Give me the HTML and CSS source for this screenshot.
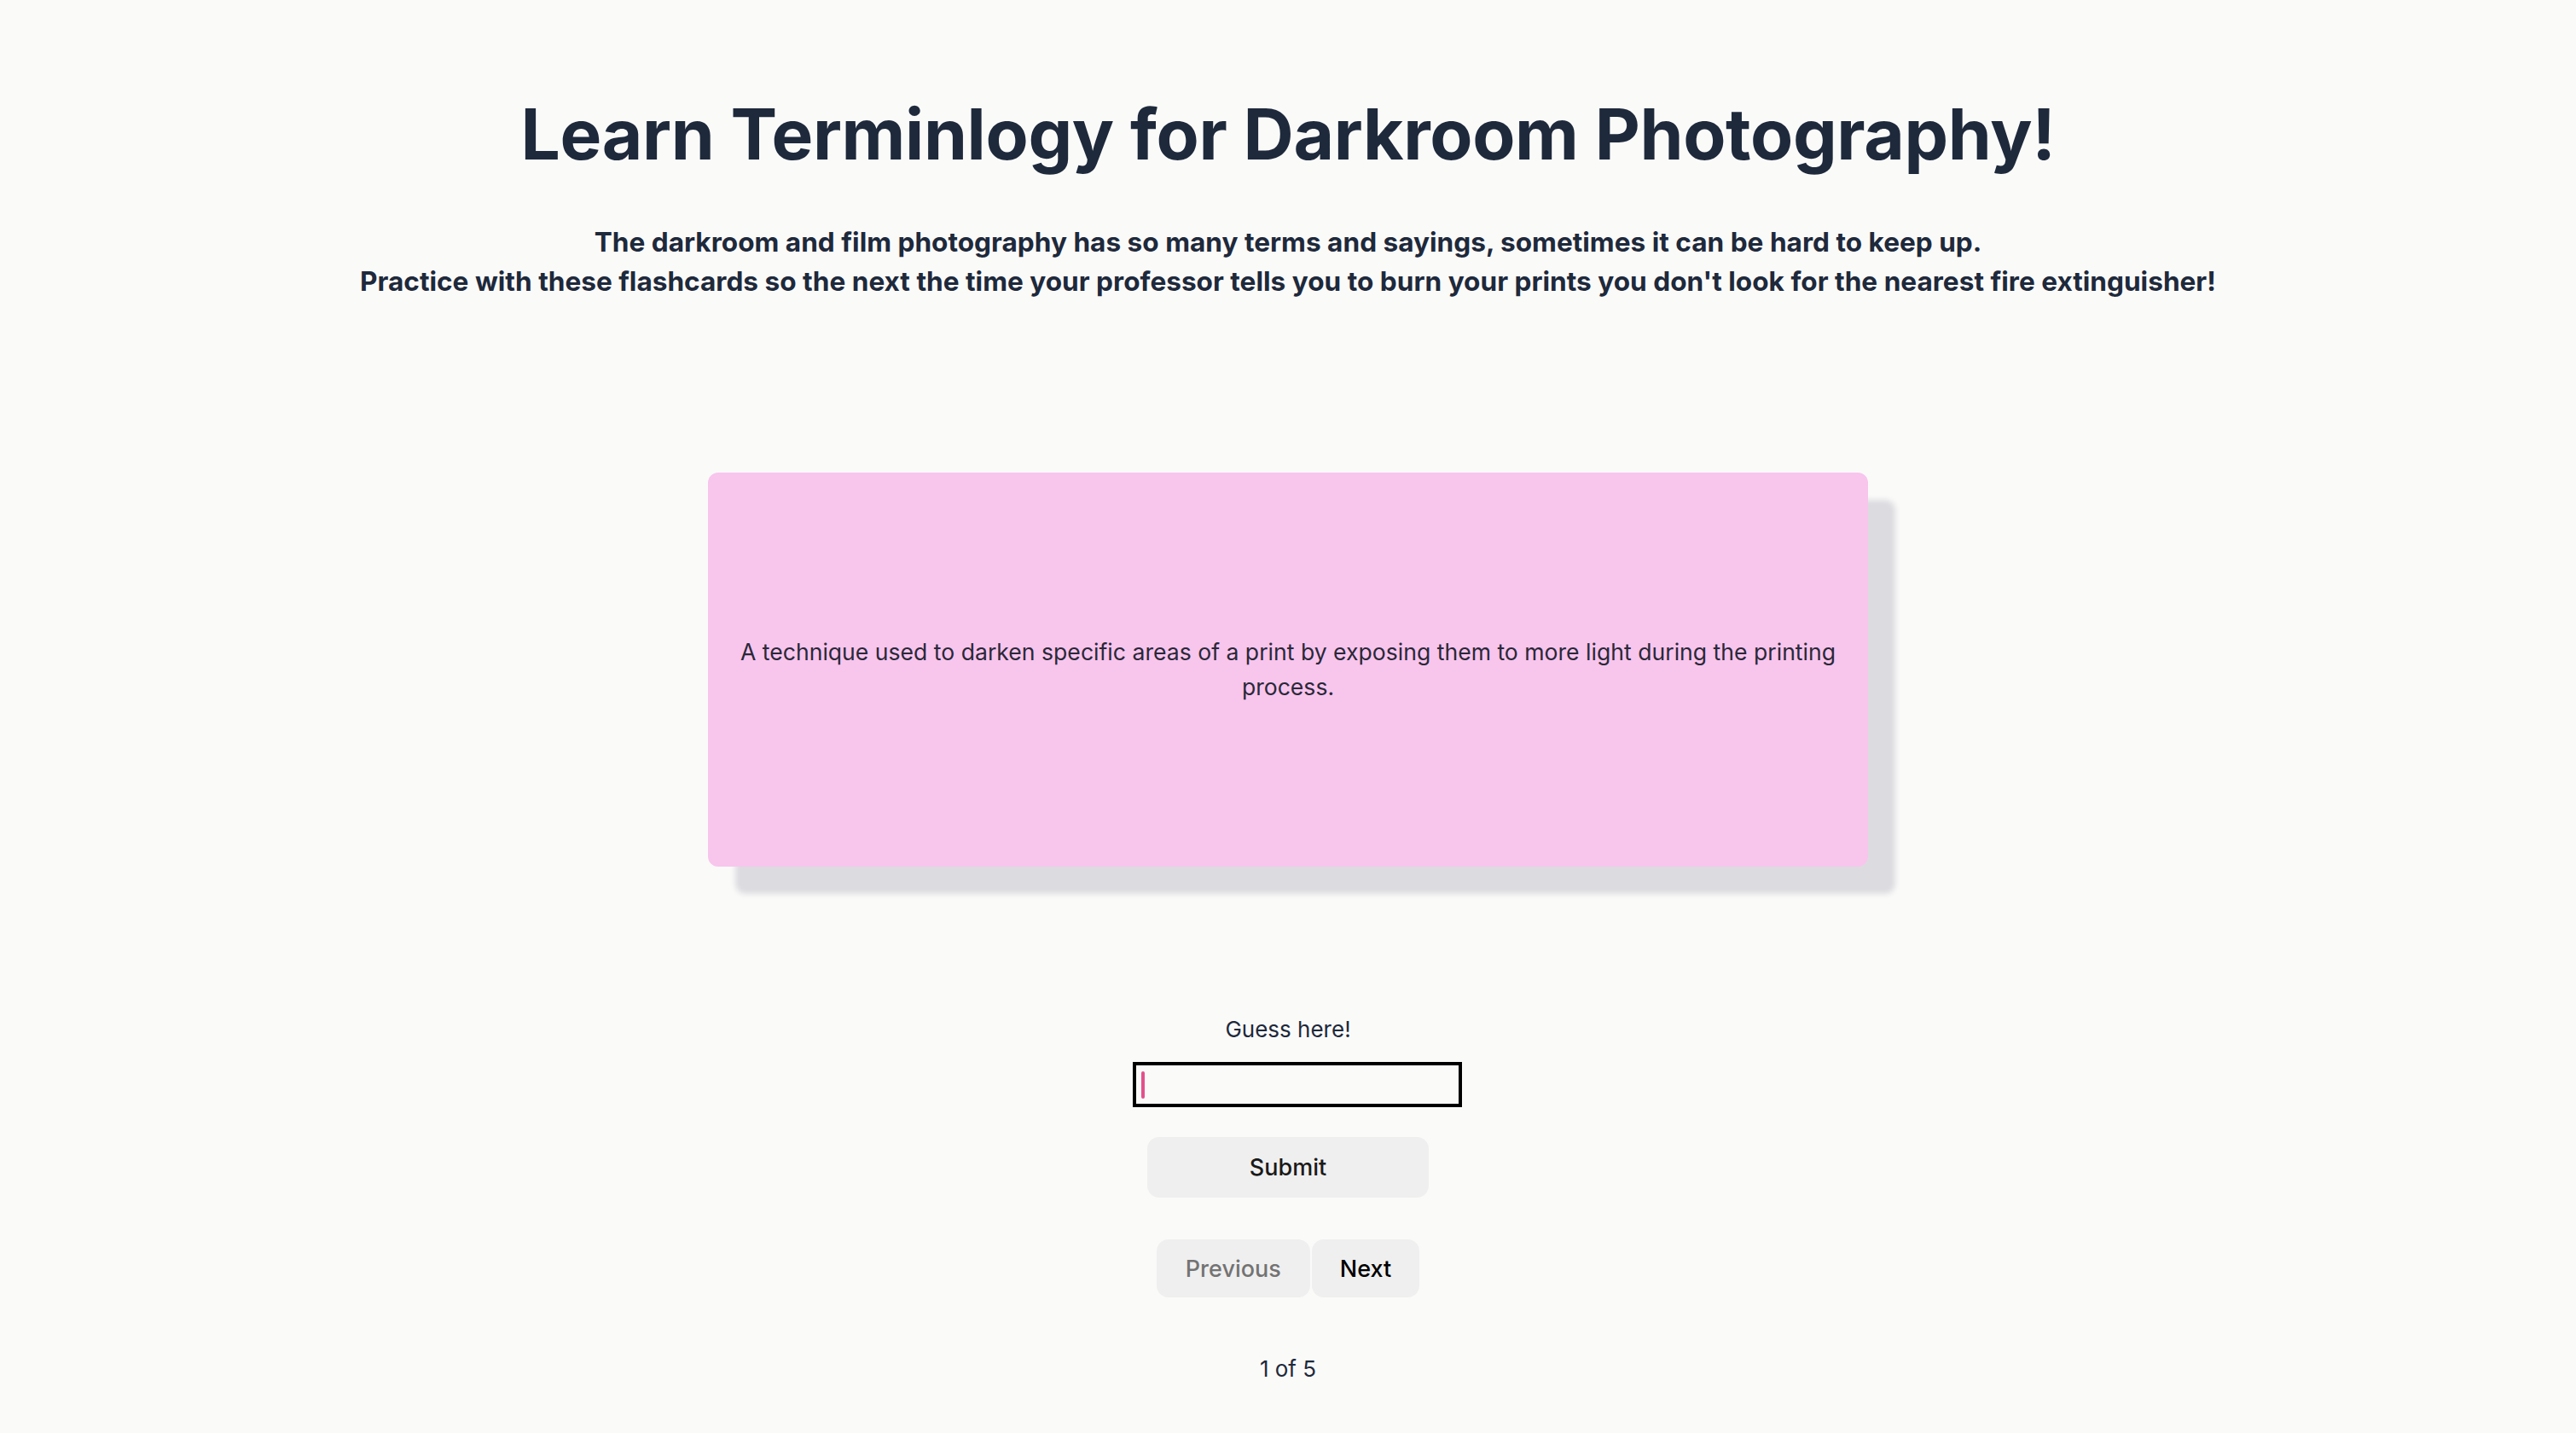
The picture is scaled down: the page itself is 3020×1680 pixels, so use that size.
FILE: index.html
```html
<!DOCTYPE html>
<html lang="en">
<head>
<meta charset="utf-8">
<title>Darkroom Flashcards</title>
<link rel="stylesheet" href="styles.css">
</head>
<body>
<main class="app">
  <h1 class="title">Learn Terminlogy for Darkroom Photography!</h1>
  <div class="intro">
    <p>The darkroom and film photography has so many terms and sayings, sometimes it can be hard to keep up.</p>
    <p>Practice with these flashcards so the next the time your professor tells you to burn your prints you don't look for the nearest fire extinguisher!</p>
  </div>
  <section class="card">
    <p class="card-text">A technique used to darken specific areas of a print by exposing them to more light during the printing process.</p>
  </section>
  <form class="guess">
    <label class="guess-label" for="guess">Guess here!</label>
    <span class="field"><input id="guess" class="guess-input" type="text" autofocus></span>
    <button class="btn submit" type="button">Submit</button>
  </form>
  <nav class="nav">
    <button class="btn nav-btn prev" type="button">Previous</button>
    <button class="btn nav-btn next" type="button">Next</button>
  </nav>
  <p class="count">1 of 5</p>
</main>
</body>
</html>
```
FILE: styles.css
```css
html, body {
  margin: 0;
  padding: 0;
}
body {
  background: #fafaf9;
  font-family: Inter, "Noto Sans", sans-serif;
  color: #1e293b;
  min-height: 1680px;
}
.app {
  display: flex;
  flex-direction: column;
  align-items: center;
  padding-top: 109px;
}
.title {
  margin: 0;
  font-size: 82px;
  line-height: 98px;
  font-weight: 700;
  color: #1e293b;
  letter-spacing: -0.35px;
}
.intro {
  margin-top: 54px;
  text-align: center;
  font-size: 31.6px;
  line-height: 46px;
  font-weight: 700;
  color: #1e293b;
}
.intro p {
  margin: 0;
}
.card {
  margin-top: 201px;
  width: 1360px;
  height: 462px;
  box-sizing: border-box;
  padding: 0 32px;
  background: #f8c5ed;
  border-radius: 12px;
  box-shadow: 32px 32px 6px rgba(20, 20, 60, 0.13);
  display: flex;
  align-items: center;
  justify-content: center;
  text-align: center;
}
.card-text {
  margin: 0;
  font-size: 26.6px;
  line-height: 41px;
  color: #2a2838;
}
.guess {
  margin-top: 175px;
  display: flex;
  flex-direction: column;
  align-items: center;
}
.guess-label {
  font-size: 26px;
  line-height: 32px;
  color: #1e293b;
}
.field {
  position: relative;
  margin-top: 22px;
  margin-left: 22px;
  display: block;
}
.field::after {
  content: "";
  position: absolute;
  left: 10px;
  top: 11px;
  width: 4px;
  height: 32px;
  border-radius: 2px;
  background: #e4508c;
}
.guess-input {
  display: block;
  width: 386px;
  height: 53px;
  box-sizing: border-box;
  border: 4px solid #000;
  border-radius: 0;
  background: transparent;
  outline: none;
  padding: 0 10px;
  font-family: Inter, sans-serif;
  font-size: 26px;
  caret-color: #e4508c;
}
.btn {
  font-family: Inter, "Noto Sans", sans-serif;
  border: none;
  background: #efefef;
  border-radius: 14px;
  font-size: 27px;
  font-weight: 500;
  color: #1a1a1a;
  cursor: pointer;
}
.submit {
  margin-top: 35px;
  width: 330px;
  height: 71px;
}
.nav {
  margin-top: 49px;
  display: flex;
  gap: 2px;
}
.nav-btn {
  height: 68px;
  padding: 0 34px;
}
.prev {
  color: #737373;
}
.next {
  padding: 0 33px;
  color: #000;
}
.count {
  margin: 68px 0 0;
  font-size: 26px;
  line-height: 32px;
  color: #1e293b;
}
```
